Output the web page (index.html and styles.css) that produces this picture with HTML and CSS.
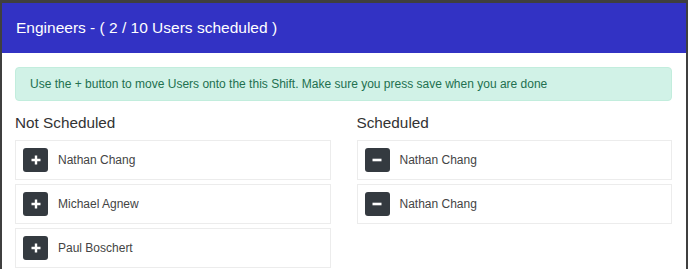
FILE: index.html
```html
<!DOCTYPE html>
<html lang="en">
<head>
  <meta charset="UTF-8">
  <title>Shift Scheduling</title>
  <link rel="stylesheet" href="styles.css">
</head>
<body>

  <div class="modal">
    <div class="modal-header">Engineers - ( 2 / 10 Users scheduled )</div>

    <div class="modal-body">
      <div class="alert">Use the + button to move Users onto the this Shift. Make sure you press save when you are done</div>

      <div class="columns">
        <div class="column">
          <h2>Not Scheduled</h2>
          <div class="user">
            <button class="btn-icon">
              <svg width="12" height="12" viewBox="0 0 12 12"><path d="M6 1.5v9M1.5 6h9" stroke="#fff" stroke-width="2.4"/></svg>
            </button>
            <span>Nathan Chang</span>
          </div>
          <div class="user">
            <button class="btn-icon">
              <svg width="12" height="12" viewBox="0 0 12 12"><path d="M6 1.5v9M1.5 6h9" stroke="#fff" stroke-width="2.4"/></svg>
            </button>
            <span>Michael Agnew</span>
          </div>
          <div class="user">
            <button class="btn-icon">
              <svg width="12" height="12" viewBox="0 0 12 12"><path d="M6 1.5v9M1.5 6h9" stroke="#fff" stroke-width="2.4"/></svg>
            </button>
            <span>Paul Boschert</span>
          </div>
        </div>

        <div class="column">
          <h2>Scheduled</h2>
          <div class="user">
            <button class="btn-icon">
              <svg width="12" height="12" viewBox="0 0 12 12"><path d="M1.5 6h9" stroke="#fff" stroke-width="2.6"/></svg>
            </button>
            <span>Nathan Chang</span>
          </div>
          <div class="user">
            <button class="btn-icon">
              <svg width="12" height="12" viewBox="0 0 12 12"><path d="M1.5 6h9" stroke="#fff" stroke-width="2.6"/></svg>
            </button>
            <span>Nathan Chang</span>
          </div>
        </div>
      </div>
    </div>
  </div>

</body>
</html>
```

FILE: styles.css
```css
body {
  margin: 0;
  background-color: #3f3f3f;
  font-family: "Liberation Sans", Arial, sans-serif;
  height: 269px;
  overflow: hidden;
}
.modal {
  margin: 3px 2px 0 2px;
  background-color: #fff;
  height: 266px;
}
.modal-header {
  height: 50px;
  line-height: 50px;
  padding-left: 14px;
  background-color: #3232c4;
  color: #fff;
  font-size: 15.5px;
}
.modal-body {
  padding: 14px 14px 0 13px;
}
.alert {
  height: 32px;
  line-height: 32px;
  padding-left: 14px;
  background-color: #d1f2e7;
  border: 1px solid #c2eddd;
  border-radius: 4px;
  color: #22704f;
  font-size: 12px;
}
.columns {
  display: grid;
  grid-template-columns: 1fr 1fr;
  gap: 26px;
}
h2 {
  margin: 13px 0 8px 0;
  font-size: 15.3px;
  font-weight: normal;
  color: #333;
  line-height: 18px;
}
.user {
  display: flex;
  align-items: center;
  height: 24px;
  padding: 7px;
  border: 1px solid #ececec;
  margin-bottom: 4px;
  font-size: 12px;
  color: #444;
}
.btn-icon {
  width: 25px;
  height: 24px;
  margin-right: 10px;
  padding: 0;
  border: none;
  border-radius: 3px;
  background-color: #343a40;
  display: flex;
  align-items: center;
  justify-content: center;
}
```
